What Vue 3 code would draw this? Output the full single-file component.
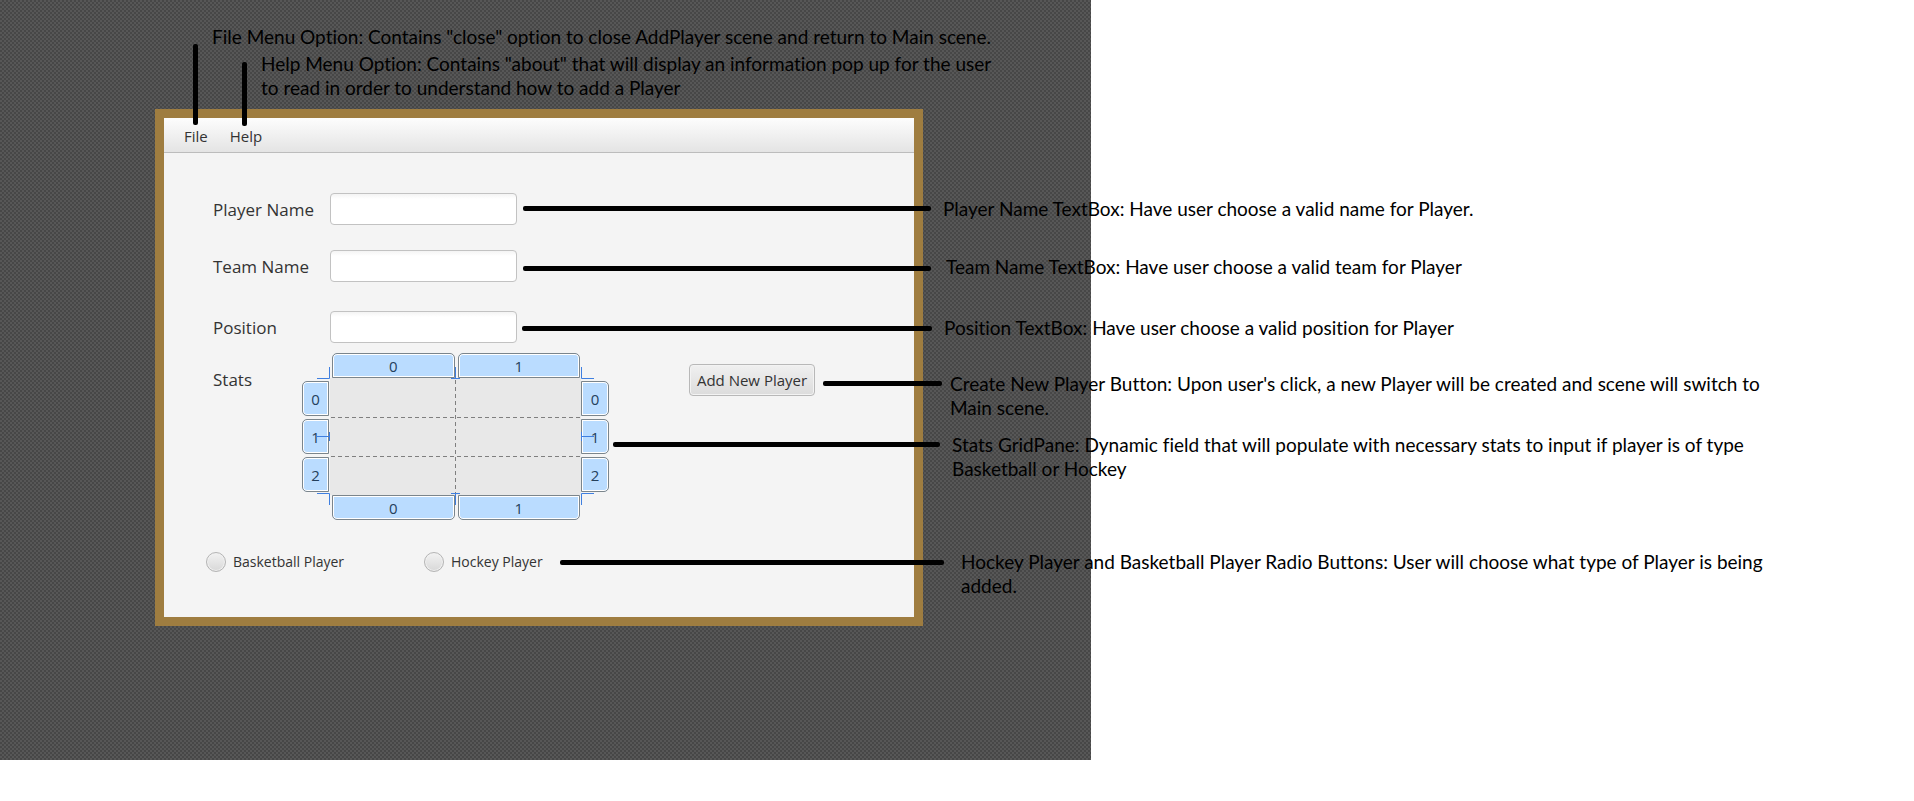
<script setup>
import { ref } from 'vue'

const fields = ref([
  { id: 'player-name', label: 'Player Name', value: '' },
  { id: 'team-name', label: 'Team Name', value: '' },
  { id: 'position', label: 'Position', value: '' },
])
const sport = ref('')
const sports = ['Basketball Player', 'Hockey Player']

const notes = [
  { x: 212, y: 25, lines: ['File Menu Option: Contains "close" option to close AddPlayer scene and return to Main scene.'] },
  { x: 261, y: 52, lines: ['Help Menu Option: Contains "about" that will display an information pop up for the user', 'to read in order to understand how to add a Player'] },
  { x: 943, y: 197, lines: ['Player Name TextBox: Have user choose a valid name for Player.'] },
  { x: 946, y: 255, lines: ['Team Name TextBox: Have user choose a valid team for Player'] },
  { x: 944, y: 316, lines: ['Position TextBox: Have user choose a valid position for Player'] },
  { x: 950, y: 372, lines: ["Create New Player Button: Upon user's click, a new Player will be created and scene will switch to", 'Main scene.'] },
  { x: 952, y: 433, lines: ['Stats GridPane: Dynamic field that will populate with necessary stats to input if player is of type', 'Basketball or Hockey'] },
  { x: 961, y: 550, lines: ['Hockey Player and Basketball Player Radio Buttons: User will choose what type of Player is being', 'added.'] },
]

const pointers = [
  { x: 193, y: 44, w: 5, h: 81 },
  { x: 242, y: 62, w: 5, h: 64 },
  { x: 523, y: 206, w: 408, h: 5 },
  { x: 523, y: 266, w: 408, h: 5 },
  { x: 522, y: 326, w: 410, h: 5 },
  { x: 823, y: 381, w: 119, h: 5 },
  { x: 613, y: 442, w: 327, h: 5 },
  { x: 560, y: 560, w: 384, h: 5 },
]
</script>

<template>
  <main class="board">
    <section class="stage">
      <div class="window">
        <nav class="menubar">
          <button type="button">File</button>
          <button type="button">Help</button>
        </nav>
        <form class="form" @submit.prevent>
          <div v-for="f in fields" :key="f.id" class="field">
            <label :for="f.id">{{ f.label }}</label>
            <input :id="f.id" v-model="f.value" type="text" />
          </div>
          <div class="stats">
            <span class="stats-label">Stats</span>
            <div class="gridpane">
              <div class="cols top"><span>0</span><span>1</span></div>
              <div class="rows left"><span>0</span><span>1</span><span>2</span></div>
              <div class="cells"></div>
              <div class="rows right"><span>0</span><span>1</span><span>2</span></div>
              <div class="cols bottom"><span>0</span><span>1</span></div>
              <svg class="guides" viewBox="0 0 307 167" aria-hidden="true">
                <g stroke="#7f7f7f" stroke-dasharray="4 3">
                  <path d="M29 64.5H278M29 103.5H278M153.5 27V140" />
                </g>
                <g stroke="#3f7fe0" fill="none">
                  <path d="M15 25.5H27.5V14M15 140.5H27.5V152M292 25.5H279.5V14M292 140.5H279.5V152" />
                  <path d="M149 25.5H158M153.5 14V26M149 140.5H158M153.5 140V152" />
                  <path d="M15 83.5H27M27.5 79V88M292 83.5H280M279.5 79V88" />
                </g>
              </svg>
            </div>
            <button class="add" type="button">Add New Player</button>
          </div>
          <div class="radios">
            <label v-for="s in sports" :key="s">
              <input v-model="sport" type="radio" name="sport" :value="s" />{{ s }}
            </label>
          </div>
        </form>
      </div>
    </section>

    <svg class="pointers" aria-hidden="true">
      <rect v-for="(p, i) in pointers" :key="i" :x="p.x" :y="p.y" :width="p.w" :height="p.h" rx="2" />
    </svg>
    <p v-for="(n, i) in notes" :key="i" class="note" :style="{ left: n.x + 'px', top: n.y + 'px' }">
      <span v-for="l in n.lines" :key="l">{{ l }}</span>
    </p>
  </main>
</template>

<style>
body {
  margin: 0;
  background: #fff;
}
</style>

<style scoped>
.board {
  position: relative;
  min-height: 100vh;
  overflow: hidden;
  font-family: "Open Sans", "Noto Sans", sans-serif;
  color: #333;
}
.stage {
  box-sizing: border-box;
  width: 57%;
  padding: 109px 168px 134px 155px;
  background: conic-gradient(#474747 25%, #575757 0 50%, #474747 0 75%, #575757 0) 0 0 / 4px 4px;
}
.window {
  border: 9px solid #9f7d40;
  background: #f4f4f4;
}
.menubar {
  display: flex;
  gap: 22px;
  height: 34px;
  padding-left: 20px;
  border-bottom: 1px solid #bcbcbc;
  background: linear-gradient(#fdfdfd, #e4e4e4);
}
.menubar button {
  padding: 0;
  border: 0;
  background: none;
  font: 15px/36px "Open Sans", "Noto Sans", sans-serif;
  color: #333;
}
.form {
  padding: 40px 0 44px;
}
.field {
  display: flex;
  align-items: center;
  margin: 0 0 25px 49px;
}
.field:nth-child(2) {
  margin-bottom: 29px;
}
.field:nth-child(3) {
  margin-bottom: 10px;
}
.field label {
  width: 117px;
  font-size: 17px;
}
.field input {
  box-sizing: border-box;
  width: 187px;
  height: 32px;
  border: 1px solid #c2c2c2;
  border-radius: 4px;
  background: linear-gradient(#f4f4f4, #fff 5px);
  font: inherit;
}
.stats {
  display: flex;
  align-items: flex-start;
  margin-left: 49px;
}
.stats-label {
  width: 89px;
  padding-top: 16px;
  font-size: 17px;
  line-height: 22px;
}
.gridpane {
  position: relative;
  display: grid;
  grid-template: 25px 117px 25px / 28px 251px 28px;
  width: 307px;
  color: #24405c;
  font-size: 15px;
}
.gridpane span {
  box-sizing: border-box;
  display: flex;
  align-items: center;
  justify-content: center;
  border: 1px solid #7b858c;
  background: #badcff;
  box-shadow: inset 0 0 0 1px #fff;
}
.cols {
  grid-column: 2;
  display: grid;
  grid-template-columns: 1fr 1fr;
  gap: 3px;
  padding: 0 1px 0 2px;
}
.top span {
  border-radius: 5px 5px 0 0;
}
.bottom span {
  border-radius: 0 0 5px 5px;
}
.rows {
  display: grid;
  grid-template-rows: repeat(3, 35px);
  gap: 3px;
  padding-top: 3px;
}
.left {
  grid-column: 1;
  padding-right: 1px;
}
.left span {
  border-radius: 5px 0 0 5px;
}
.right span {
  border-radius: 0 5px 5px 0;
}
.cells {
  background: #e8e8e8;
}
.guides {
  position: absolute;
  inset: 0;
  width: 100%;
  height: 100%;
}
.add {
  box-sizing: border-box;
  width: 126px;
  height: 32px;
  margin: 11px 0 0 80px;
  padding: 0;
  border: 1px solid #b8b8b8;
  border-radius: 4px;
  background: linear-gradient(#f0f0f0, #dcdcdc);
  box-shadow: inset 0 0 0 1px #f3f3f3;
  font: 15px "Open Sans", "Noto Sans", sans-serif;
  color: #333;
}
.radios {
  display: grid;
  grid-template-columns: 218px 1fr;
  margin: 31px 0 0 42px;
}
.radios label {
  display: flex;
  align-items: center;
  gap: 7px;
  font-size: 14px;
  line-height: 22px;
}
.radios input {
  box-sizing: border-box;
  appearance: none;
  width: 20px;
  height: 20px;
  margin: 0;
  border: 1px solid #b4b4b4;
  border-radius: 50%;
  background: linear-gradient(#f2f2f2, #d8d8d8);
  box-shadow: inset 0 0 0 1px #f1f1f1;
}
.radios input:checked {
  background: radial-gradient(#333 4px, #e4e4e4 5px);
}
.pointers {
  position: absolute;
  inset: 0;
  width: 100%;
  height: 100%;
  pointer-events: none;
}
.note {
  position: absolute;
  margin: 0;
  font: 19px/24px Lato, Carlito, sans-serif;
  font-variant-ligatures: none;
  color: #000;
  white-space: nowrap;
}
.note span {
  display: block;
}
</style>
